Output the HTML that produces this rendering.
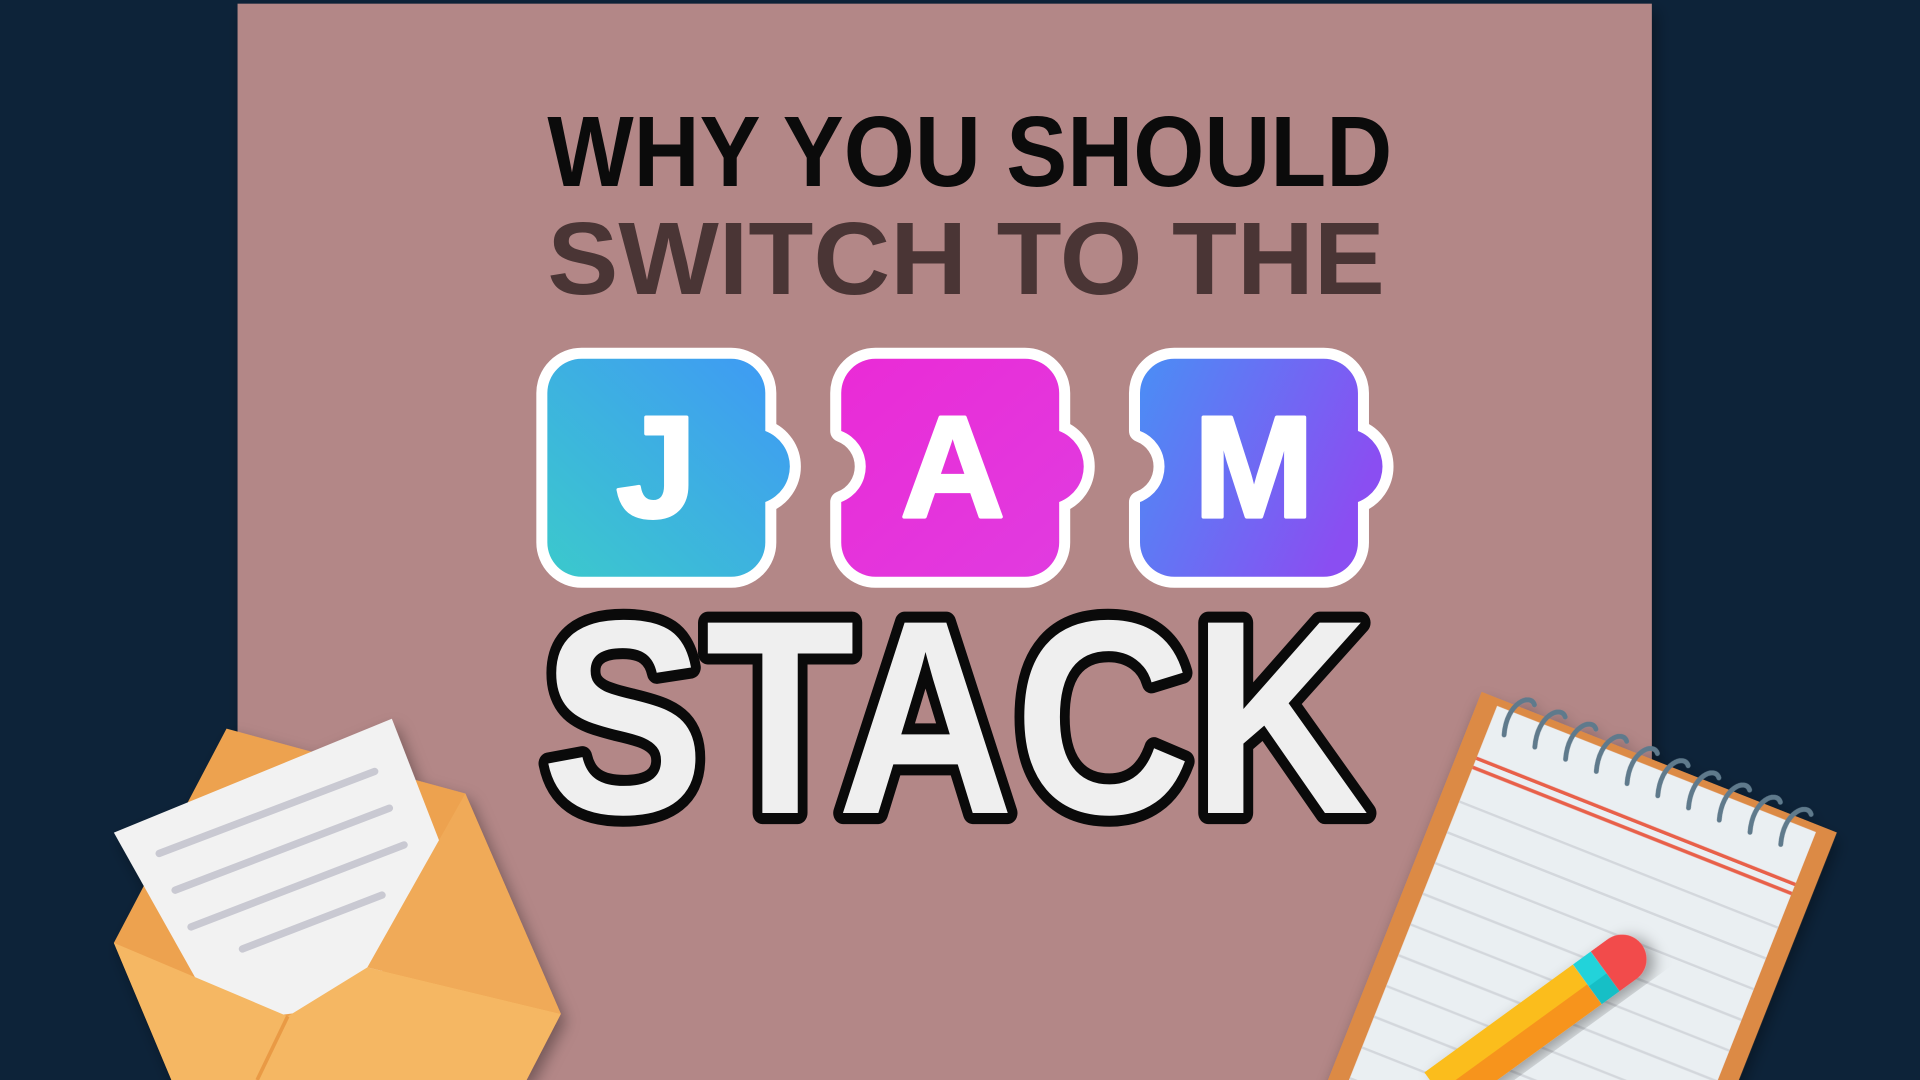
<!DOCTYPE html>
<html><head><meta charset="utf-8"><style>html,body{margin:0;padding:0;background:#0d2339;overflow:hidden;width:1920px;height:1080px}svg{display:block}</style></head>
<body>
<svg width="1920" height="1080" viewBox="0 0 1568 882" xmlns="http://www.w3.org/2000/svg">
<defs>
<linearGradient id="gj" x1="0" y1="1" x2="1" y2="0"><stop offset="0" stop-color="#3bc9cc"/><stop offset="1" stop-color="#3f98f6"/></linearGradient>
<linearGradient id="ga" x1="0" y1="0" x2="1" y2="1"><stop offset="0" stop-color="#ea2bd6"/><stop offset="1" stop-color="#e03ce0"/></linearGradient>
<linearGradient id="gm" x1="0" y1="0" x2="1" y2="0.4"><stop offset="0" stop-color="#4a8ef5"/><stop offset="1" stop-color="#8a4ef2"/></linearGradient>
<filter id="sh" x="-20%" y="-20%" width="140%" height="140%"><feDropShadow dx="4" dy="6" stdDeviation="6" flood-color="#000" flood-opacity="0.35"/></filter>
<clipPath id="frame"><rect width="1568" height="882"/></clipPath>
</defs>
<g clip-path="url(#frame)">
<rect width="1568" height="882" fill="#0d2339"/>
<rect x="194" y="3" width="1155" height="879" fill="#b38787" filter="url(#sh)"/>

<text x="447" y="152" font-family="Liberation Sans, sans-serif" font-weight="bold" font-size="82" fill="#0b0b0b" textLength="690" lengthAdjust="spacingAndGlyphs">WHY YOU SHOULD</text>
<text x="447" y="240" font-family="Liberation Sans, sans-serif" font-weight="bold" font-size="84" fill="#4a3535" textLength="684" lengthAdjust="spacingAndGlyphs">SWITCH TO THE</text>

<g stroke="#fff" stroke-width="18" stroke-linejoin="round" paint-order="stroke">
<path fill="url(#gj)" d="M475,293 H597 A28,28 0 0 1 625,321 V352 A31,31 0 0 1 625,410 V443 A28,28 0 0 1 597,471 H475 A28,28 0 0 1 447,443 V321 A28,28 0 0 1 475,293 Z"/>
<path fill="url(#ga)" d="M715,293 H837 A28,28 0 0 1 865,321 V352 A31,31 0 0 1 865,410 V443 A28,28 0 0 1 837,471 H715 A28,28 0 0 1 687,443 V410 A31,31 0 0 0 687,352 V321 A28,28 0 0 1 715,293 Z"/>
<path fill="url(#gm)" d="M959,293 H1081 A28,28 0 0 1 1109,321 V352 A31,31 0 0 1 1109,410 V443 A28,28 0 0 1 1081,471 H959 A28,28 0 0 1 931,443 V410 A31,31 0 0 0 931,352 V321 A28,28 0 0 1 959,293 Z"/>
</g>
<g font-family="Liberation Sans, sans-serif" font-weight="bold" font-size="118" fill="#fff" stroke="#fff" stroke-width="3" stroke-linejoin="round" text-anchor="middle">
<text x="536" y="422">J</text>
<text x="778" y="422">A</text>
<text x="1024" y="422">M</text>
</g>

<text x="442" y="664" font-family="Liberation Sans, sans-serif" font-weight="bold" font-size="226" fill="#efefef" stroke="#0a0a0a" stroke-width="18" stroke-linejoin="round" paint-order="stroke" textLength="676" lengthAdjust="spacingAndGlyphs">STACK</text>

<!-- envelope -->
<g filter="url(#sh)">
<polygon points="93,770 185,595 380,648 458,828 430,882 140,882" fill="#eda24f"/>
<polygon points="93,680 320,587 360,690 300,820 180,835" fill="#f2f2f2"/>
<g stroke="#c9c9d2" stroke-width="6" stroke-linecap="round">
<line x1="130" y1="697" x2="306" y2="630"/>
<line x1="143" y1="727" x2="318" y2="660"/>
<line x1="156" y1="757" x2="330" y2="690"/>
<line x1="198" y1="775" x2="312" y2="731"/>
</g>
<polygon points="93,770 235,830 300,790 458,828 430,882 140,882" fill="#f5b763"/>
<polygon points="300,790 458,828 380,648" fill="#f0aa58"/>
<line x1="235" y1="830" x2="210" y2="882" stroke="#e99a45" stroke-width="3"/>
</g>

<!-- notepad -->
<g transform="translate(1210,565) rotate(21.6)" filter="url(#sh)">
<rect x="0" y="0" width="312" height="620" fill="#dc8a45"/>
<rect x="16" y="6" width="280" height="620" fill="#eaeff2"/>
<line x1="16" y1="52" x2="296" y2="52" stroke="#e8604a" stroke-width="3"/>
<line x1="16" y1="60" x2="296" y2="60" stroke="#e8604a" stroke-width="3"/>
<g stroke="#d3d7dc" stroke-width="2">
<line x1="16" y1="90" x2="296" y2="90"/><line x1="16" y1="117" x2="296" y2="117"/><line x1="16" y1="144" x2="296" y2="144"/><line x1="16" y1="171" x2="296" y2="171"/><line x1="16" y1="198" x2="296" y2="198"/><line x1="16" y1="225" x2="296" y2="225"/><line x1="16" y1="252" x2="296" y2="252"/><line x1="16" y1="279" x2="296" y2="279"/><line x1="16" y1="306" x2="296" y2="306"/><line x1="16" y1="333" x2="296" y2="333"/><line x1="16" y1="360" x2="296" y2="360"/>
</g>
<g fill="none" stroke="#5f7a8c" stroke-width="4" stroke-linecap="round">
<path d="M30,26 C22,0 38,-14 44,-6"/><path d="M57,26 C49,0 65,-14 71,-6"/><path d="M84,26 C76,0 92,-14 98,-6"/><path d="M111,26 C103,0 119,-14 125,-6"/><path d="M138,26 C130,0 146,-14 152,-6"/><path d="M165,26 C157,0 173,-14 179,-6"/><path d="M192,26 C184,0 200,-14 206,-6"/><path d="M219,26 C211,0 227,-14 233,-6"/><path d="M246,26 C238,0 254,-14 260,-6"/><path d="M273,26 C265,0 281,-14 287,-6"/>
</g>
</g>
<!-- pencil -->
<g transform="translate(1175,892) rotate(-36)" filter="url(#sh)">
<rect x="0" y="-20" width="150" height="40" fill="#fbbd1a"/>
<rect x="0" y="0" width="150" height="20" fill="#f7941d"/>
<rect x="150" y="-20" width="18" height="40" fill="#22d3da"/>
<rect x="150" y="2" width="18" height="18" fill="#13bfc6"/>
<path d="M168,-20 H185 A20,20 0 0 1 185,20 H168 Z" fill="#f24b4b"/>
</g>
</g>
</svg>
</body></html>
